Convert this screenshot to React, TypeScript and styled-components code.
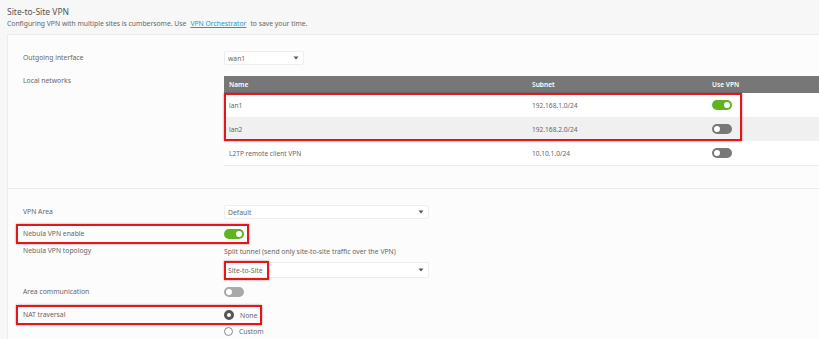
import { createGlobalStyle, styled } from 'styled-components'

const Global = createGlobalStyle`
	html, body {
		margin: 0;
		background: #f6f7f6;
		overflow: hidden;
	}
	body {
		font-family: "Noto Sans", "Open Sans", sans-serif;
		color: #666;
	}
`

const Page = styled.div`
	width: 819px;
	height: 339px;
	padding-left: 7px;
	box-sizing: border-box;
	overflow: hidden;
`
const Title = styled.div`
	font-size: 8.5px;
	color: #555;
	padding-top: 6px;
	line-height: 12px;
`
const Subtitle = styled.div`
	font-size: 6.8px;
	color: #666;
	line-height: 12px;
	margin-bottom: 4px;
`
const Link = styled.a`
	color: #1b9ad8;
	text-decoration: underline;
	margin: 0 4px;
`
const Panel = styled.div`
	background: #fcfcfc;
	border-top: 1px solid #ececec;
	border-left: 1px solid #ececec;
`
const Section = styled.div<{ $top: number; $bottom: number }>`
	display: flex;
	flex-direction: column;
	padding: ${p => p.$top}px 0 ${p => p.$bottom}px 15px;
	& + & {
		border-top: 1px solid #ececec;
	}
`
const Row = styled.div<{ $gap?: number; $box?: number }>`
	position: relative;
	display: grid;
	grid-template-columns: 201px 1fr;
	align-items: center;
	margin-top: ${p => p.$gap ?? 0}px;
	${p => p.$box ? `
		&::after {
			content: '';
			position: absolute;
			left: -7px;
			top: -5px;
			bottom: -5px;
			width: ${p.$box}px;
			border: 2px solid #e3161c;
			box-shadow: 0 0 2px rgba(120, 0, 0, 0.5);
			box-sizing: border-box;
			pointer-events: none;
		}
	` : ''}
`
const Label = styled.div<{ $top?: boolean }>`
	font-size: 6.8px;
	line-height: 10px;
	color: #666;
	align-self: ${p => p.$top ? 'start' : 'center'};
`
const Select = styled.div<{ $w: number; $h?: number }>`
	width: ${p => p.$w}px;
	height: ${p => p.$h ?? 14}px;
	box-sizing: border-box;
	background: #fff;
	border: 1px solid #eeeeee;
	border-radius: 2px;
	display: flex;
	align-items: center;
	justify-content: space-between;
	padding: 0 4px 0 3px;
	font-size: 6.8px;
	color: #666;
`
const Marked = styled.span`
	position: relative;
	&::after {
		content: '';
		position: absolute;
		left: -4px;
		right: -6px;
		top: -5px;
		bottom: -5px;
		border: 2px solid #e3161c;
		box-shadow: 0 0 2px rgba(120, 0, 0, 0.5);
	}
`
const Table = styled.div`
	font-size: 6.6px;
	border-bottom: 1px solid #ececec;
`
const TRow = styled.div<{ $head?: boolean; $alt?: boolean }>`
	display: grid;
	grid-template-columns: 303px 180px 1fr;
	align-items: center;
	height: ${p => p.$head ? 17 : 24}px;
	padding-left: 5px;
	background: ${p => p.$head ? '#777' : p.$alt ? '#f0f0f0' : '#fff'};
	color: ${p => p.$head ? '#fff' : '#666'};
	font-weight: ${p => p.$head ? 600 : 400};
`
const Group = styled.div`
	position: relative;
	&::after {
		content: '';
		position: absolute;
		left: 0;
		top: 0;
		bottom: 0;
		width: 518px;
		border: 2px solid #e3161c;
		box-shadow: 0 0 2px rgba(120, 0, 0, 0.5);
		box-sizing: border-box;
	}
`
const Toggle = styled.div<{ $on?: boolean; $muted?: boolean }>`
	width: 20px;
	height: 10px;
	border-radius: 5px;
	background: ${p => p.$on ? '#5db41f' : p.$muted ? '#a9a9a9' : '#787878'};
	position: relative;
	&::after {
		content: '';
		position: absolute;
		top: 2px;
		left: ${p => p.$on ? 12 : 2}px;
		width: 6px;
		height: 6px;
		border-radius: 50%;
		background: #fff;
	}
`
const Stack = styled.div`
	display: flex;
	flex-direction: column;
	gap: 4px;
`
const Hint = styled.div`
	font-size: 6.8px;
	line-height: 12px;
	color: #666;
`
const Radio = styled.div<{ $on?: boolean }>`
	display: flex;
	align-items: center;
	gap: 6px;
	font-size: 6.8px;
	color: #666;
	&::before {
		content: '';
		width: ${p => p.$on ? 4 : 7}px;
		height: ${p => p.$on ? 4 : 7}px;
		border-radius: 50%;
		border: ${p => p.$on ? '3px solid #555' : '1px solid #888'};
		background: #fff;
	}
`
const Caret = () => (
	<svg width="6" height="4" viewBox="0 0 6 4">
		<path d="M0.5 0.5h5L3 3.5z" fill="#555" />
	</svg>
)

const networks = [
	{ name: 'lan1', subnet: '192.168.1.0/24', on: true },
	{ name: 'lan2', subnet: '192.168.2.0/24', on: false },
]

export default function App() {
	return (
		<Page>
			<Global />
			<Title>Site-to-Site VPN</Title>
			<Subtitle>
				Configuring VPN with multiple sites is cumbersome. Use<Link>VPN Orchestrator</Link>to save your time.
			</Subtitle>
			<Panel>
				<Section $top={16} $bottom={22}>
					<Row>
						<Label>Outgoing interface</Label>
						<Select $w={80}>wan1<Caret /></Select>
					</Row>
					<Row $gap={11}>
						<Label $top>Local networks</Label>
						<Table>
							<TRow $head><span>Name</span><span>Subnet</span><span>Use VPN</span></TRow>
							<Group>
								{networks.map((n, i) => (
									<TRow key={n.name} $alt={i === 1}>
										<span>{n.name}</span><span>{n.subnet}</span><Toggle $on={n.on} />
									</TRow>
								))}
							</Group>
							<TRow><span>L2TP remote client VPN</span><span>10.10.1.0/24</span><Toggle /></TRow>
						</Table>
					</Row>
				</Section>
				<Section $top={16} $bottom={4}>
					<Row>
						<Label>VPN Area</Label>
						<Select $w={205}>Default<Caret /></Select>
					</Row>
					<Row $gap={10} $box={233}>
						<Label>Nebula VPN enable</Label>
						<Toggle $on />
					</Row>
					<Row $gap={7}>
						<Label $top>Nebula VPN topology</Label>
						<Stack>
							<Hint>Split tunnel (send only site-to-site traffic over the VPN)</Hint>
							<Select $w={205} $h={16}><Marked>Site-to-Site</Marked><Caret /></Select>
						</Stack>
					</Row>
					<Row $gap={9}>
						<Label>Area communication</Label>
						<Toggle $muted />
					</Row>
					<Row $gap={13} $box={246}>
						<Label>NAT traversal</Label>
						<Radio $on>None</Radio>
					</Row>
					<Row $gap={7}>
						<Label />
						<Radio>Custom</Radio>
					</Row>
				</Section>
			</Panel>
		</Page>
	)
}
